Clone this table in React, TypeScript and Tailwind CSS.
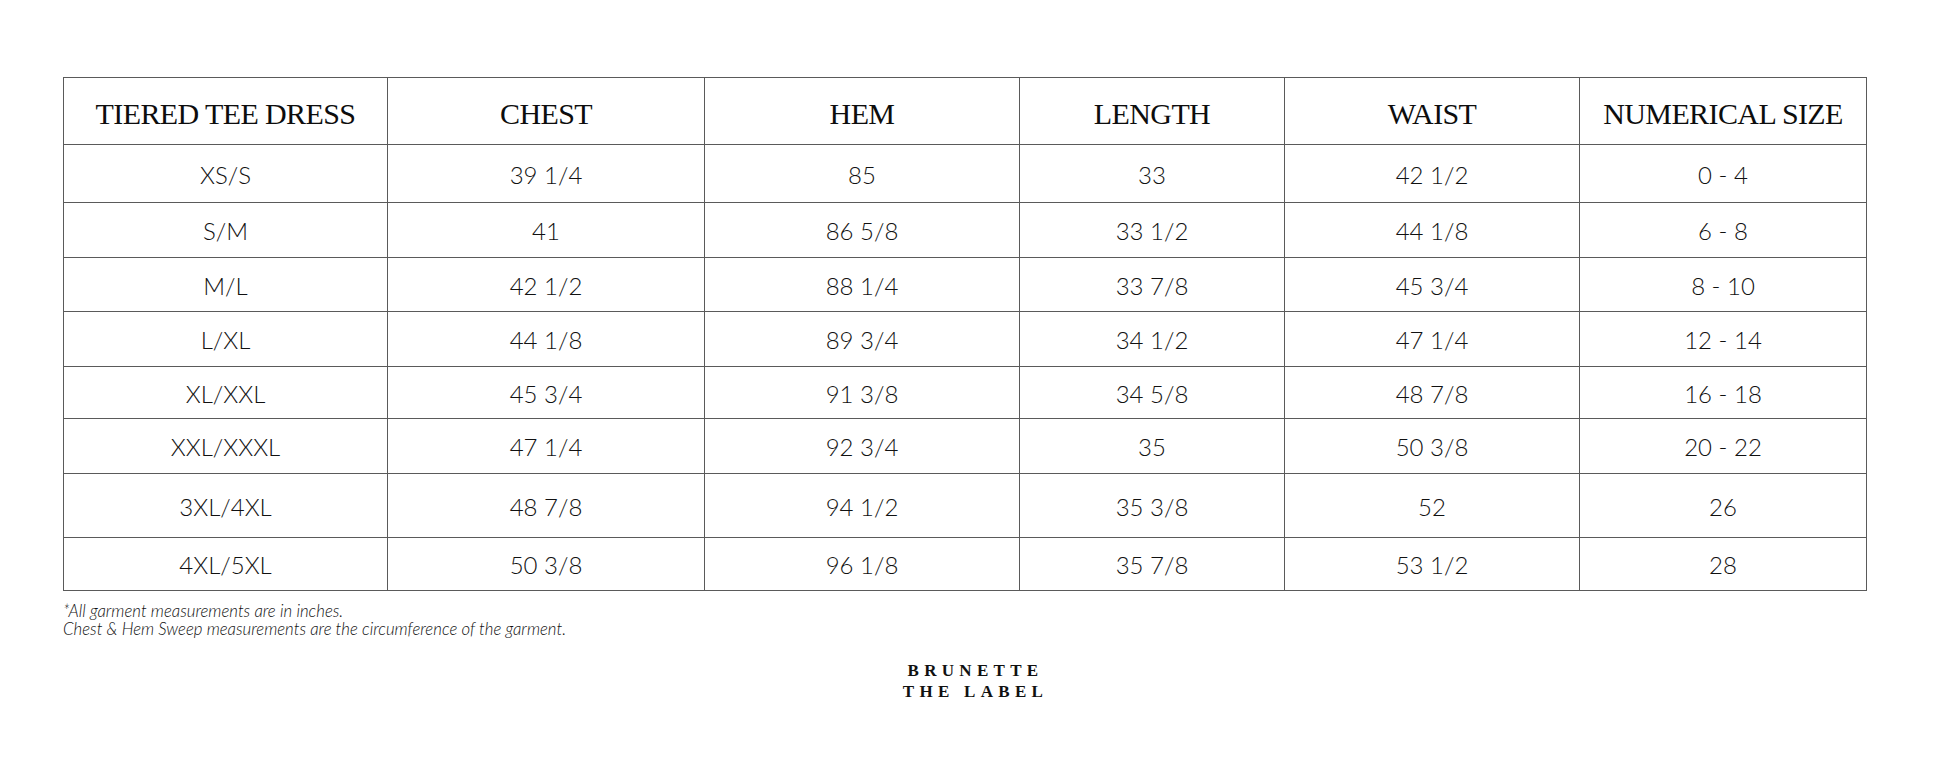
import React from "react";

const headers = ["TIERED TEE DRESS", "CHEST", "HEM", "LENGTH", "WAIST", "NUMERICAL SIZE"];
const rows: string[][] = [
  ["XS/S", "39 1/4", "85", "33", "42 1/2", "0 - 4"],
  ["S/M", "41", "86 5/8", "33 1/2", "44 1/8", "6 - 8"],
  ["M/L", "42 1/2", "88 1/4", "33 7/8", "45 3/4", "8 - 10"],
  ["L/XL", "44 1/8", "89 3/4", "34 1/2", "47 1/4", "12 - 14"],
  ["XL/XXL", "45 3/4", "91 3/8", "34 5/8", "48 7/8", "16 - 18"],
  ["XXL/XXXL", "47 1/4", "92 3/4", "35", "50 3/8", "20 - 22"],
  ["3XL/4XL", "48 7/8", "94 1/2", "35 3/8", "52", "26"],
  ["4XL/5XL", "50 3/8", "96 1/8", "35 7/8", "53 1/2", "28"],
];
const rowHeights = ["h-[58px]", "h-[55px]", "h-[54px]", "h-[55px]", "h-[52px]", "h-[55px]", "h-[64px]", "h-[53px]"];

export default function App() {
  return (
    <div className="w-[1946px] h-[778px] bg-white overflow-hidden">
      <div className="pl-[63px] pt-[77px]">
        <table className="table-fixed border-collapse w-[1803px]">
          <colgroup>
            <col className="w-[324px]" />
            <col className="w-[317px]" />
            <col className="w-[315px]" />
            <col className="w-[265px]" />
            <col className="w-[295px]" />
            <col className="w-[287px]" />
          </colgroup>
          <thead>
            <tr className="h-[67px]">
              {headers.map((h) => (
                <th
                  key={h}
                  className="border border-[#5a5a5a] text-center align-middle font-normal text-[#0d0d0d] text-[30px] tracking-[-0.6px] pt-[5px]"
                  style={{ fontFamily: '"Liberation Serif", serif' }}
                >
                  {h}
                </th>
              ))}
            </tr>
          </thead>
          <tbody>
            {rows.map((r, i) => (
              <tr key={i} className={rowHeights[i]}>
                {r.map((c, j) => (
                  <td
                    key={j}
                    className="border border-[#5a5a5a] text-center align-middle text-[24px] font-light text-[#111] pt-[2px]"
                    style={{ fontFamily: "Lato, sans-serif" }}
                  >
                    {c}
                  </td>
                ))}
              </tr>
            ))}
          </tbody>
        </table>
        <div
          className="mt-[11px] text-[16.8px] leading-[18px] italic font-light text-[#111]"
          style={{ fontFamily: "Lato, sans-serif" }}
        >
          <p>*All garment measurements are in inches.</p>
          <p>Chest &amp; Hem Sweep measurements are the circumference of the garment.</p>
        </div>
      </div>
      <div
        className="mt-[22px] flex flex-col items-center text-[17px] leading-[21px] font-bold text-[#111] tracking-[5.3px]"
        style={{ fontFamily: '"Liberation Serif", serif' }}
      >
        <span className="pl-[5px]">BRUNETTE</span>
        <span className="pl-[5px]">THE LABEL</span>
      </div>
    </div>
  );
}
